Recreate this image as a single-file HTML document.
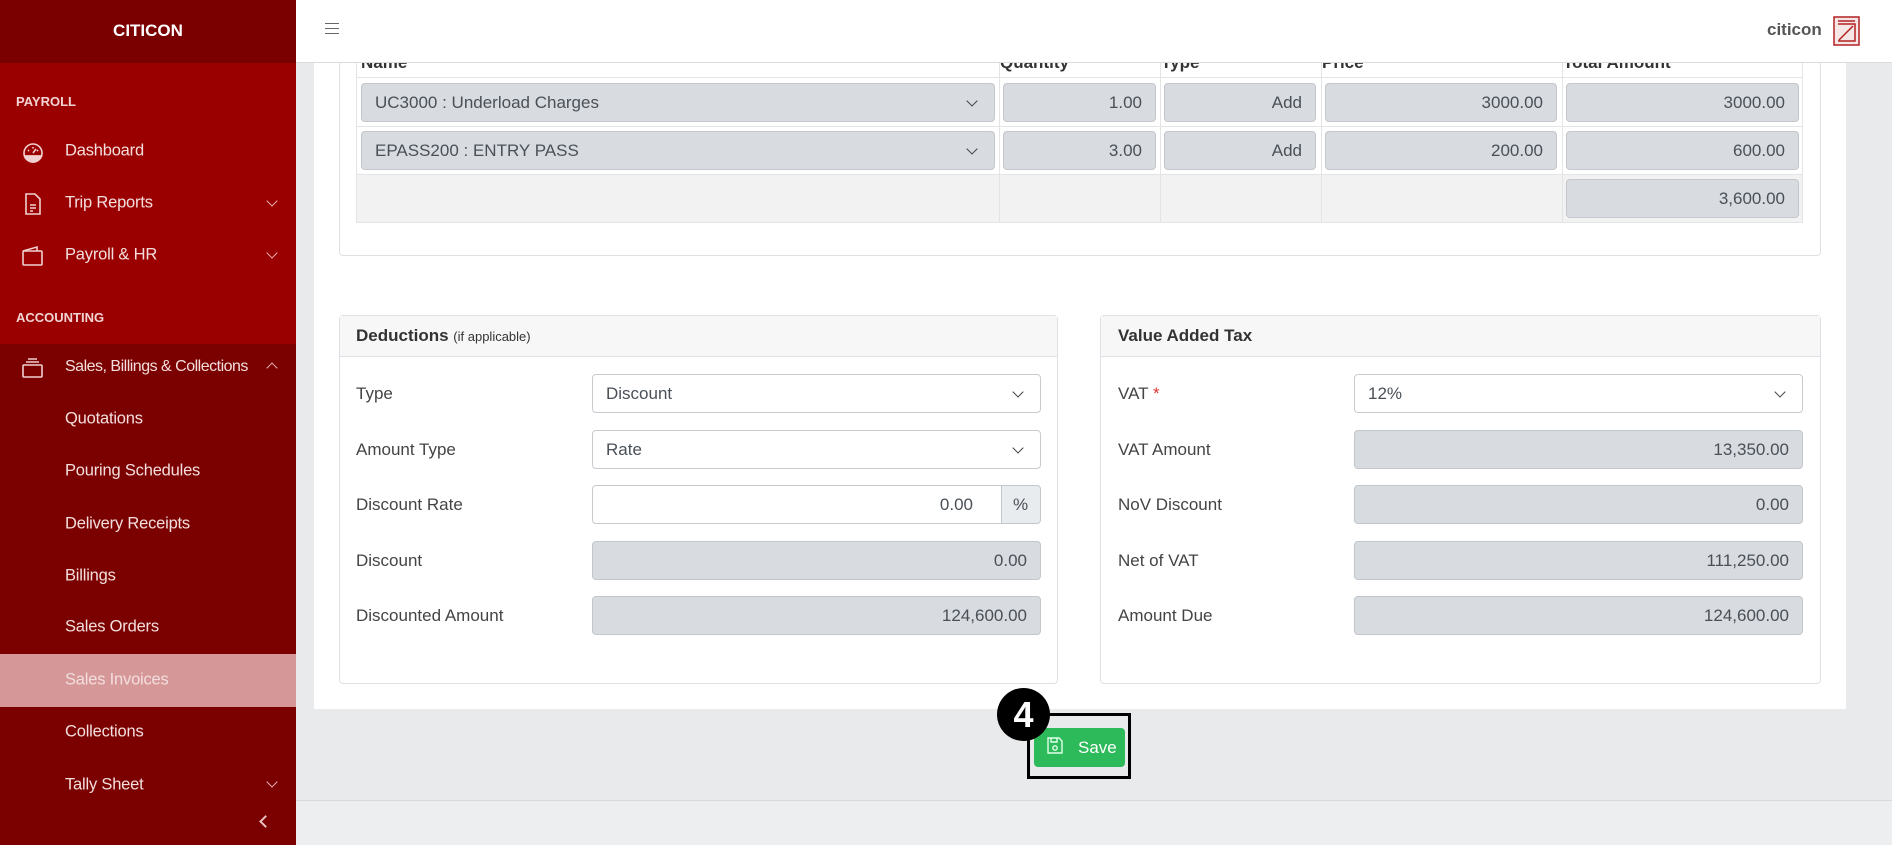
<!DOCTYPE html>
<html><head><meta charset="utf-8"><style>
*{box-sizing:border-box;margin:0;padding:0}
body{width:1892px;height:845px;overflow:hidden;background:#e9eaec;font-family:"Liberation Sans",sans-serif;color:#333;position:relative}
.a{position:absolute}
.sb{left:0;top:0;width:296px;height:845px;background:#7b0000}
.logo{left:0;top:0;width:296px;height:63px;background:#7a0000;color:#fff;font-weight:bold;font-size:17px;text-align:center;line-height:61px}
.red{left:0;top:63px;width:296px;height:281px;background:#9b0000}
.sec{left:16px;color:#f2d4d4;font-weight:bold;font-size:13px}
.it{left:65px;color:#f3dede;font-size:16.5px;transform:translateY(-50%);letter-spacing:-0.2px}
.chev{left:268px;width:8px;height:8px;border-right:1.3px solid #e8b0b0;border-bottom:1.3px solid #e8b0b0;transform:rotate(45deg)}
.hdr{left:296px;top:0;width:1596px;height:63px;background:#fff;border-bottom:1px solid #dcdcdc}
.card{background:#fff;border:1px solid #dee2e6;border-radius:4px}
.inp{background:#d8dbe0;border:1px solid #c3c7cc;border-radius:4px;height:39px;font-size:17px;color:#495057;line-height:37px;padding:0 13px}
.r{text-align:right}
.wh{background:#fff;border-color:#c7cbd0}
.lab{font-size:17px;color:#444;transform:translateY(-50%)}
.dd::after{content:"";position:absolute;right:18px;top:13px;width:7px;height:7px;border-right:1.5px solid #444;border-bottom:1.5px solid #444;transform:rotate(45deg)}
td{border:1px solid #e2e4e6}
</style></head><body>
<div class="a sb"></div>
<div class="a red"></div>
<div class="a logo">CITICON</div>
<div class="a sec" style="top:94px">PAYROLL</div>
<div class="a sec" style="top:310px">ACCOUNTING</div>
<svg class="a" style="left:21px;top:141px" width="24" height="24" viewBox="0 0 24 24" fill="none" stroke="#f0d0d0" stroke-width="1.6"><circle cx="12" cy="12" r="9"/><path d="M3 15h18" /><path d="M12 12l3-4"/><path d="M7 9l1 1M12 6v1.5M17 9l-1 1"/><path d="M3.5 15a9 9 0 0 0 17 0z" fill="#f0d0d0"/></svg>
<svg class="a" style="left:24px;top:193px" width="18" height="22" viewBox="0 0 18 22" fill="none" stroke="#f0d0d0" stroke-width="1.6"><path d="M2 1h9l5 5v15H2z"/><path d="M6 12h6M6 15h6M6 18h3"/></svg>
<svg class="a" style="left:21px;top:245px" width="24" height="22" viewBox="0 0 24 22" fill="none" stroke="#f0d0d0" stroke-width="1.6"><rect x="2" y="6" width="19" height="14" rx="1"/><path d="M2 6l14-4v4"/></svg>
<svg class="a" style="left:21px;top:357px" width="24" height="22" viewBox="0 0 24 22" fill="none" stroke="#f0d0d0" stroke-width="1.6"><rect x="2" y="8" width="19" height="12" rx="1"/><path d="M5 5h13M7 2h9"/></svg>
<div class="a it" style="top:151px">Dashboard</div>
<div class="a it" style="top:203px">Trip Reports</div>
<div class="a it" style="top:255px">Payroll &amp; HR</div>
<div class="a it" style="top:367px;letter-spacing:-0.5px;font-size:16px">Sales, Billings &amp; Collections</div>
<div class="a chev" style="top:197px"></div>
<div class="a chev" style="top:249px"></div>
<div class="a chev" style="top:364px;transform:rotate(225deg)"></div>
<div class="a" style="left:0;top:654px;width:296px;height:53px;background:#d59797"></div>
<div class="a it" style="top:419px">Quotations</div>
<div class="a it" style="top:471px">Pouring Schedules</div>
<div class="a it" style="top:524px">Delivery Receipts</div>
<div class="a it" style="top:576px">Billings</div>
<div class="a it" style="top:627px">Sales Orders</div>
<div class="a it" style="top:680px">Sales Invoices</div>
<div class="a it" style="top:732px">Collections</div>
<div class="a it" style="top:785px">Tally Sheet</div>
<div class="a chev" style="top:778px"></div>
<div class="a" style="left:261px;top:817px;width:9px;height:9px;border-left:2.5px solid #e8c0c0;border-bottom:2.5px solid #e8c0c0;transform:rotate(45deg)"></div>

<div class="a" style="left:314px;top:63px;width:1532px;height:646px;background:#fff"></div>
<div class="a" style="left:296px;top:800px;width:1596px;height:45px;background:#eceef0;border-top:1px solid #d8d9db"></div>
<div class="a card" style="left:339px;top:30px;width:1482px;height:226px"></div>
<table class="a" style="left:356px;top:40px;width:1447px;border-collapse:collapse">
<tr style="height:37px;font-weight:bold;font-size:17px;vertical-align:bottom"><td style="width:643px;padding:0 0 4px 4px">Name</td><td style="width:161px;padding-bottom:4px">Quantity</td><td style="width:161px;padding-bottom:4px">Type</td><td style="width:241px;padding-bottom:4px">Price</td><td style="padding-bottom:4px">Total Amount</td></tr>
<tr style="height:49px"><td></td><td></td><td></td><td></td><td></td></tr>
<tr style="height:48px"><td></td><td></td><td></td><td></td><td></td></tr>
<tr style="height:48px;background:#f2f2f2"><td></td><td></td><td></td><td></td><td></td></tr>
</table>
<div class="a hdr"></div>
<div class="a" style="left:325px;top:23px;width:14px;height:1.3px;background:#666;box-shadow:0 5px 0 #666,0 10px 0 #666"></div>
<div class="a" style="left:1767px;top:20px;font-weight:bold;font-size:17px;color:#555">citicon</div>
<svg class="a" style="left:1833px;top:16px" width="27" height="30" viewBox="0 0 27 30" fill="none" stroke="#b22222" stroke-width="1.5"><rect x="1" y="1" width="25" height="28" fill="#f7e6e6"/><path d="M5 5h17M5 8h17v17H5M6 24l14-14"/></svg>

<div class="a inp dd" style="left:361px;top:83px;width:634px">UC3000 : Underload Charges</div>
<div class="a inp r" style="left:1003px;top:83px;width:153px">1.00</div>
<div class="a inp r" style="left:1164px;top:83px;width:152px">Add</div>
<div class="a inp r" style="left:1325px;top:83px;width:232px">3000.00</div>
<div class="a inp r" style="left:1566px;top:83px;width:233px">3000.00</div>
<div class="a inp dd" style="left:361px;top:131px;width:634px">EPASS200 : ENTRY PASS</div>
<div class="a inp r" style="left:1003px;top:131px;width:153px">3.00</div>
<div class="a inp r" style="left:1164px;top:131px;width:152px">Add</div>
<div class="a inp r" style="left:1325px;top:131px;width:232px">200.00</div>
<div class="a inp r" style="left:1566px;top:131px;width:233px">600.00</div>
<div class="a inp r" style="left:1566px;top:179px;width:233px">3,600.00</div>

<div class="a card" style="left:339px;top:315px;width:719px;height:369px"></div>
<div class="a" style="left:340px;top:316px;width:717px;height:41px;background:#f7f7f7;border-bottom:1px solid #dee2e6;padding:10px 16px;font-size:17px;color:#333"><b>Deductions</b> <span style="font-size:13px">(if applicable)</span></div>
<div class="a lab" style="left:356px;top:394px">Type</div>
<div class="a lab" style="left:356px;top:450px">Amount Type</div>
<div class="a lab" style="left:356px;top:505px">Discount Rate</div>
<div class="a lab" style="left:356px;top:561px">Discount</div>
<div class="a lab" style="left:356px;top:616px">Discounted Amount</div>
<div class="a inp wh dd" style="left:592px;top:374px;width:449px">Discount</div>
<div class="a inp wh dd" style="left:592px;top:430px;width:449px">Rate</div>
<div class="a inp wh r" style="left:592px;top:485px;width:410px;border-radius:4px 0 0 4px;padding-right:28px">0.00</div>
<div class="a inp" style="left:1001px;top:485px;width:40px;background:#e9ecef;border-radius:0 4px 4px 0;padding:0 11px">%</div>
<div class="a inp r" style="left:592px;top:541px;width:449px">0.00</div>
<div class="a inp r" style="left:592px;top:596px;width:449px">124,600.00</div>

<div class="a card" style="left:1100px;top:315px;width:721px;height:369px"></div>
<div class="a" style="left:1101px;top:316px;width:719px;height:41px;background:#f7f7f7;border-bottom:1px solid #dee2e6;padding:10px 17px;font-size:17px;color:#333"><b>Value Added Tax</b></div>
<div class="a lab" style="left:1118px;top:394px">VAT <span style="color:#d33">*</span></div>
<div class="a lab" style="left:1118px;top:450px">VAT Amount</div>
<div class="a lab" style="left:1118px;top:505px">NoV Discount</div>
<div class="a lab" style="left:1118px;top:561px">Net of VAT</div>
<div class="a lab" style="left:1118px;top:616px">Amount Due</div>
<div class="a inp wh dd" style="left:1354px;top:374px;width:449px">12%</div>
<div class="a inp r" style="left:1354px;top:430px;width:449px">13,350.00</div>
<div class="a inp r" style="left:1354px;top:485px;width:449px">0.00</div>
<div class="a inp r" style="left:1354px;top:541px;width:449px">111,250.00</div>
<div class="a inp r" style="left:1354px;top:596px;width:449px">124,600.00</div>

<div class="a" style="left:1027px;top:713px;width:104px;height:66px;border:3.5px solid #000"></div>
<div class="a" style="left:1034px;top:728px;width:91px;height:39px;background:#2dba5b;border-radius:4px;color:#fff;font-size:17px;line-height:39px;padding-left:44px">Save</div>
<svg class="a" style="left:1047px;top:737px" width="16" height="17" viewBox="0 0 16 17" fill="none" stroke="#e0ffe8" stroke-width="1.4"><path d="M1 1h11l3 3v12H1z"/><path d="M4 1v4h6V1"/><circle cx="8" cy="11" r="2.2"/></svg>
<div class="a" style="left:997px;top:688px;width:53px;height:53px;border-radius:50%;background:#000;color:#fff;font-weight:bold;font-size:36px;text-align:center;line-height:53px">4</div>
</body></html>
